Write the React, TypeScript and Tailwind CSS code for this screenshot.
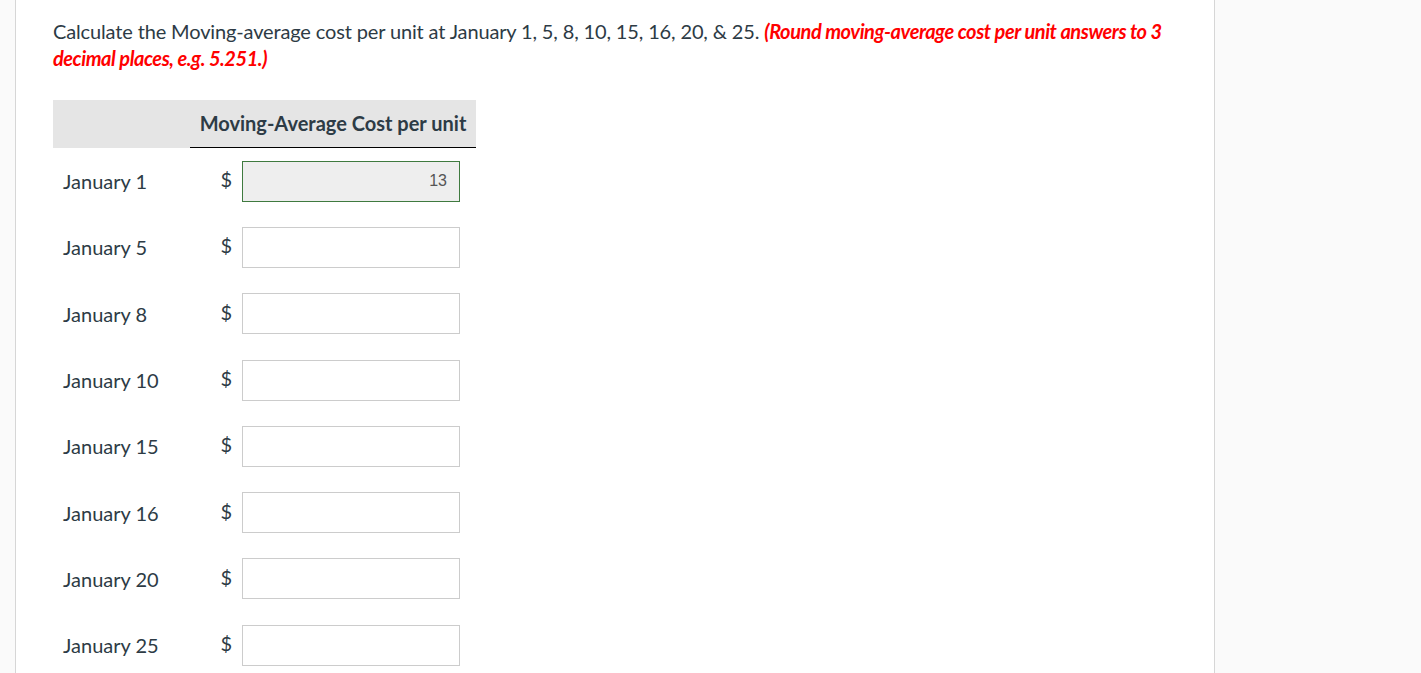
import React from "react";

const rows = ["January 1", "January 5", "January 8", "January 10", "January 15", "January 16", "January 20", "January 25"];

export default function App() {
  return (
    <div className="flex min-h-[673px] w-full bg-[#fafafa]" style={{ fontFamily: "Lato, 'Noto Sans', sans-serif" }}>
      <div className="w-[15px] shrink-0 bg-[#fafafa]" />
      <div className="w-[1200px] shrink-0 border-x border-[#d6d6d6] bg-white pl-[37px] pt-[18px] text-[#2d3b45]">
        <p className="w-[1125px] text-[20px] leading-[27px] tracking-[-0.14px]">
          Calculate the Moving-average cost per unit at January 1, 5, 8, 10, 15, 16, 20, &amp; 25.{" "}
          <span className="font-bold italic tracking-[-0.45px] text-[#ff0000]">
            (Round moving-average cost per unit answers to 3 decimal places, e.g. 5.251.)
          </span>
        </p>
        <div className="mt-[28px] w-[423px]">
          <div className="flex h-[48px] bg-[#e5e5e5]">
            <div className="w-[137px] shrink-0" />
            <div className="flex flex-1 items-center justify-center border-b border-black pb-[2px] text-[20px] font-bold">
              Moving-Average Cost per unit
            </div>
          </div>
          {rows.map((r, i) => (
            <div key={r} className="flex h-[66.3px] items-center">
              <div className="w-[137px] shrink-0 pl-[10px] text-[20px]">{r}</div>
              <div className="w-[52px] shrink-0 pr-[10px] text-right text-[20px] -mt-[4px]">$</div>
              {i === 0 ? (
                <div
                  className="flex h-[41px] w-[218px] items-center justify-end border border-[#3f7a3f] bg-[#eeeeee] pr-[12px] text-[16px] text-[#555]"
                  style={{ fontFamily: "'Liberation Sans', Arial, sans-serif" }}
                >
                  13
                </div>
              ) : (
                <div className="h-[41px] w-[218px] border border-[#cccccc] bg-white" />
              )}
            </div>
          ))}
        </div>
      </div>
      <div className="flex-1 bg-[#fafafa]" />
    </div>
  );
}
